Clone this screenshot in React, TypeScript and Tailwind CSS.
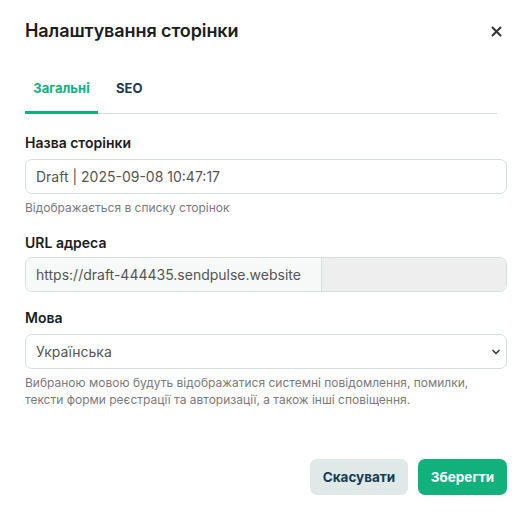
import { ChevronDown } from "lucide-react";

export default function App() {
  return (
    <div className="h-[518px] w-[532px] bg-white font-['Inter',sans-serif] text-[#1c1c1c]">
      <div className="px-[25px] pt-[19px]">
        <div className="flex items-center justify-between">
          <h1 className="text-[18px] font-semibold leading-[24px] tracking-[-0.1px]">Налаштування сторінки</h1>
          <button type="button" className="mr-[1px] flex h-5 w-5 items-center justify-center text-[#333]">
            <svg width="11" height="11" viewBox="0 0 11 11" fill="none">
              <path d="M1.5 1.5 9.5 9.5M9.5 1.5 1.5 9.5" stroke="currentColor" strokeWidth="2" strokeLinecap="round" />
            </svg>
          </button>
        </div>

        <div className="mt-[30px] flex w-[472px] border-b border-[#d3dcdc]">
          <div className="-mb-[1px] w-[73px] border-b-[3px] border-[#12b07a] pb-[14px] pt-[6px] text-center text-[13px] font-bold leading-[18px] text-[#12b07a]">
            Загальні
          </div>
          <div className="ml-[18px] pb-[14px] pt-[6px] text-[13px] font-bold leading-[18px] text-[#173b54]">SEO</div>
        </div>

        <div className="mt-[20px] w-[482px]">
          <label className="block text-[14px] font-semibold leading-[18px]">Назва сторінки</label>
          <input
            readOnly
            value="Draft | 2025-09-08 10:47:17"
            className="mt-[7px] block h-[35px] w-full rounded-[7px] border border-[#d6dede] px-[10px] text-[14px] text-[#555] outline-none"
          />
          <p className="mt-[6px] text-[12px] leading-[16px] text-[#7a7a7a]">Відображається в списку сторінок</p>

          <label className="mt-[18px] block text-[14px] font-semibold leading-[18px]">URL адреса</label>
          <div className="mt-[5px] flex h-[35px] w-full overflow-hidden rounded-[7px] border border-[#d6dede]">
            <div className="flex w-[296px] items-center border-r border-[#d6dede] bg-[#f7f9f9] px-[10px] text-[14px] text-[#555]">
              https://draft-444435.sendpulse.website
            </div>
            <div className="flex-1 bg-[#eeeeee]" />
          </div>

          <label className="mt-[17px] block text-[14px] font-semibold leading-[18px]">Мова</label>
          <div className="relative mt-[7px] flex h-[35px] w-full items-center rounded-[7px] border border-[#d6dede] px-[10px] text-[14px] text-[#555]">
            Українська
            <ChevronDown className="absolute right-[4px] top-[11px] h-[12px] w-[12px] text-[#444]" strokeWidth={3.5} />
          </div>
          <p className="mt-[5px] text-[12px] leading-[17px] text-[#7a7a7a]">
            Вибраною мовою будуть відображатися системні повідомлення, помилки, тексти форми реєстрації та авторизації, а також інші сповіщення.
          </p>
        </div>

        <div className="mt-[51px] flex w-[482px] justify-end gap-[10px]">
          <button type="button" className="h-[36px] w-[98px] rounded-[7px] bg-[#e1e8e8] text-[13.5px] font-bold text-[#173b54]">
            Скасувати
          </button>
          <button type="button" className="h-[36px] w-[89px] rounded-[7px] bg-[#12b07a] text-[13.5px] font-bold text-white">
            Зберегти
          </button>
        </div>
      </div>
    </div>
  );
}
